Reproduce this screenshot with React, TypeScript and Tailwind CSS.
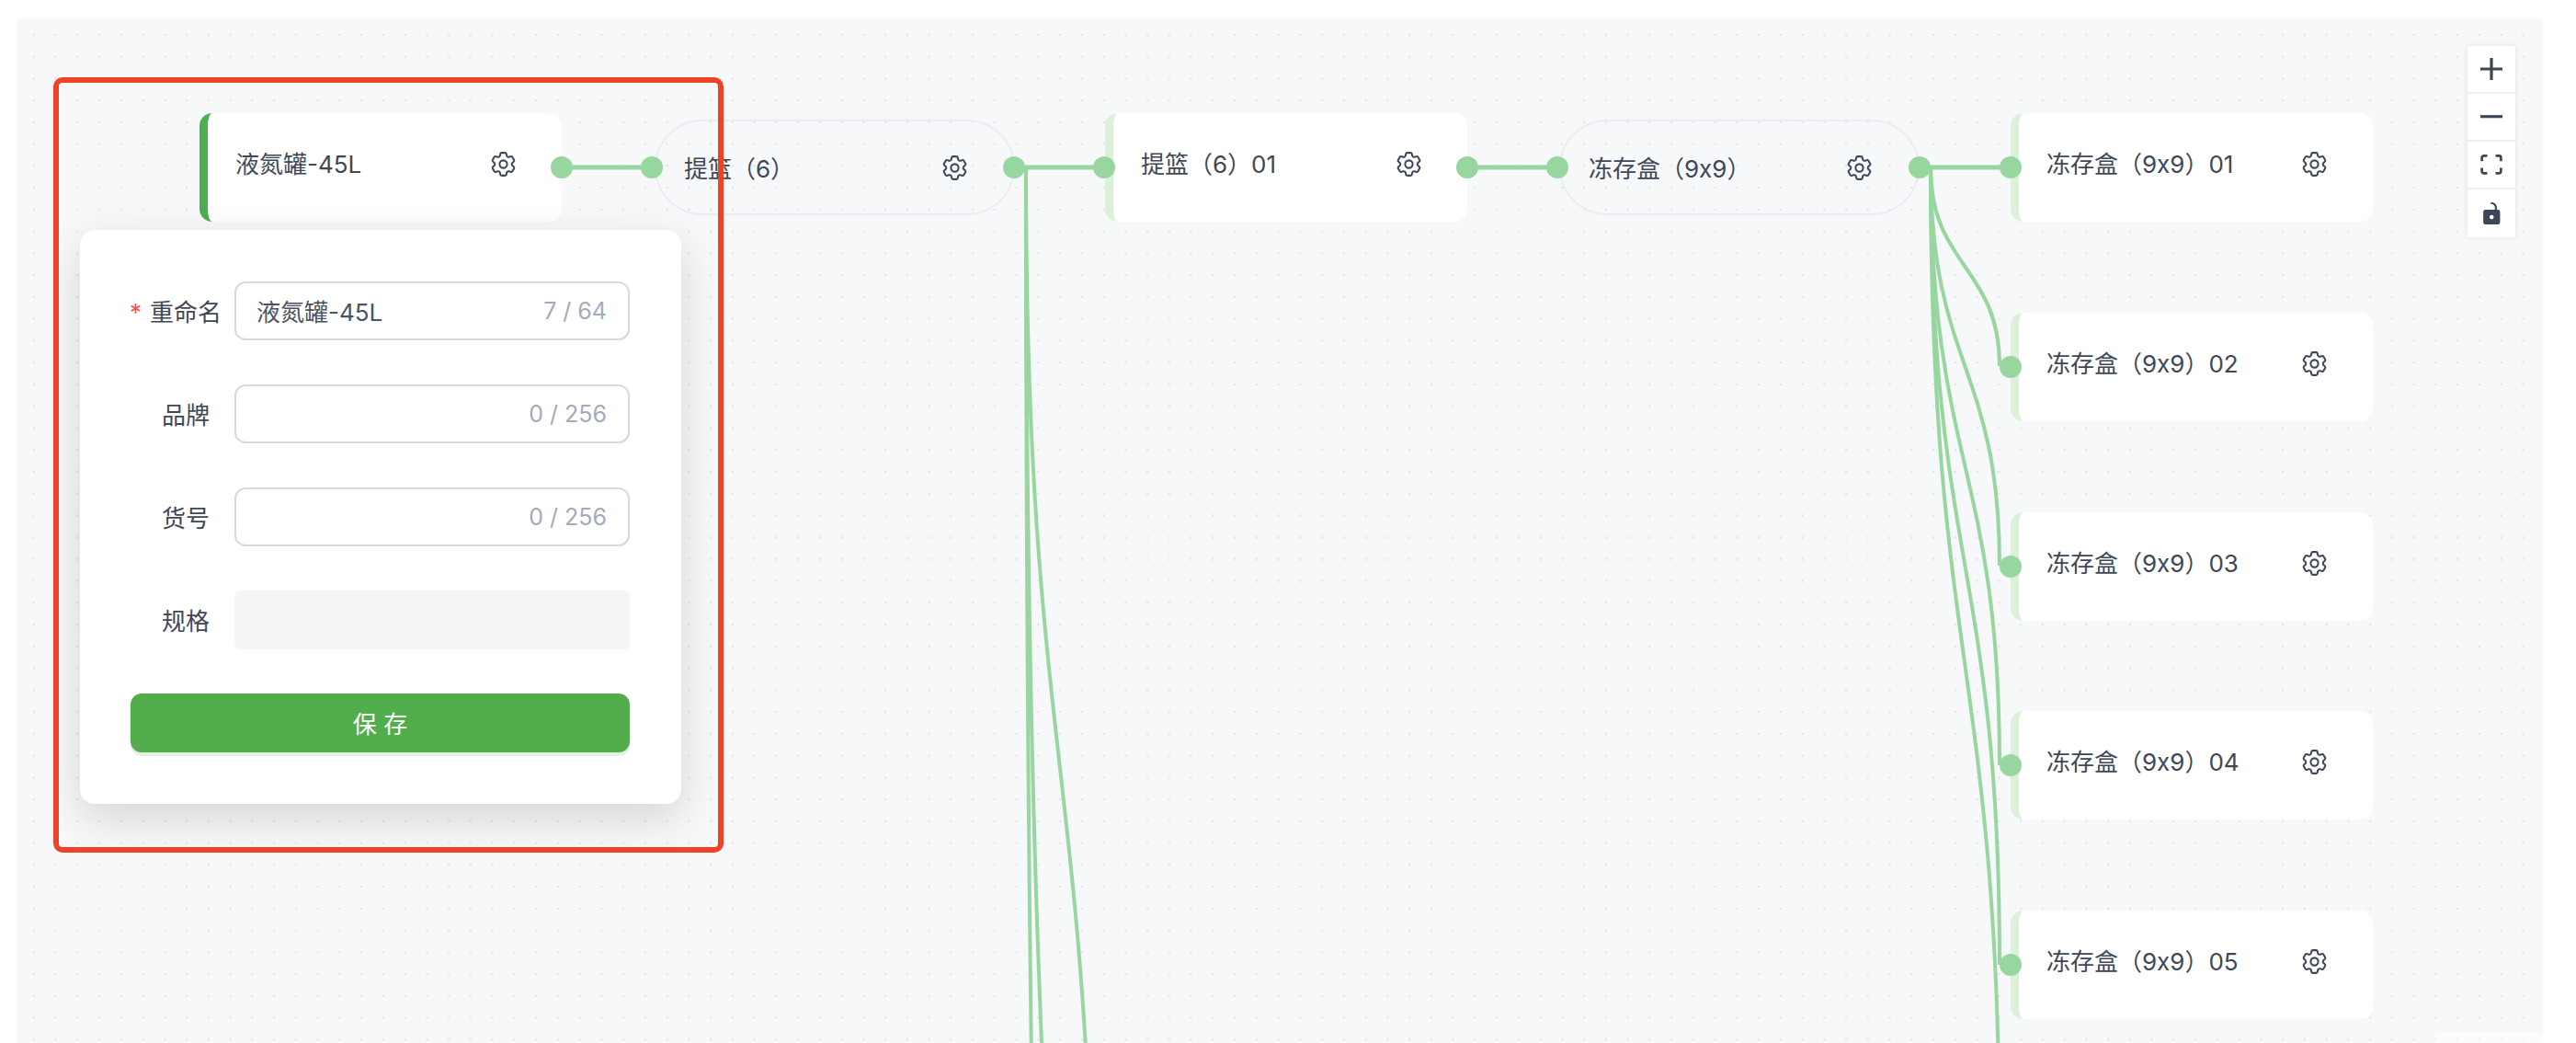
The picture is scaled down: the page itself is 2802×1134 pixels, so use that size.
import { HiOutlineCog6Tooth } from 'react-icons/hi2'

const FONT = 'font-["Inter","Noto_Sans_CJK_SC",sans-serif]'

function Gear({ className }: { className: string }) {
  return <HiOutlineCog6Tooth className={`absolute h-[33px] w-[33px] text-[#3f4757] ${className}`} />
}

function BoxNode({ label, left, top, active }: { label: string; left: string; top: string; active?: boolean }) {
  return (
    <div
      className={`absolute h-[118px] w-[394px] rounded-[14px] border-l-[9px] bg-white ${left} ${top} ${active ? 'border-l-[#4caf50]' : 'border-l-[#dcf0da]'}`}
    >
      <span className="absolute left-[30px] top-[41px] text-[26px] leading-[30px] whitespace-pre text-[#3f4757]">{label}</span>
      <Gear className="right-[47px] top-[39px]" />
    </div>
  )
}

function PillNode({ label, left }: { label: string; left: string }) {
  return (
    <div className={`absolute top-[110px] h-[104px] w-[392px] rounded-[52px] border-2 border-[#eaecef] ${left}`}>
      <span className="absolute left-[30px] top-[37px] text-[26px] leading-[30px] whitespace-pre text-[#3f4757]">{label}</span>
      <Gear className="right-[47px] top-[34px]" />
    </div>
  )
}

function Handle({ left, top }: { left: string; top: string }) {
  return <div className={`absolute h-[24px] w-[24px] rounded-full bg-[#98d6a0] ${left} ${top}`} />
}

function FormRow({ label, required, count, value }: { label: string; required?: boolean; count: string; value?: string }) {
  return (
    <div className="flex items-center">
      <div className={`flex w-[113px] shrink-0 justify-end whitespace-nowrap pt-[2px] text-[26px] text-[#3f4757] ${required ? 'pr-[14px]' : 'pr-[27px]'}`}>
        {required ? <span className="mr-[9px] text-[#ff4d4f]">*</span> : null}
        {label}
      </div>
      <div className="flex h-[64px] flex-1 items-center justify-between rounded-[12px] border-2 border-[#d9d9d9] bg-white pl-[22px] pr-[23px] pt-[2px] text-[26px]">
        <span className="text-[#4b5363]">{value}</span>
        <span className="text-[25px] text-[#a3abbb]">{count}</span>
      </div>
    </div>
  )
}

export default function App() {
  // canvas offset: edges are drawn relative to the canvas box at (18, 20)
  const source2 = 'M1098 162 C1098 816 1172 816 1172 1464'
  const source2b = 'M1098 162 C1098 1518 1172 1518 1172 2874'
  const source2c = 'M1098 162 C1098 2360 1172 2360 1172 4557'
  const targets = [398, 615, 832, 1049, 1266]

  return (
    <div className={`relative h-[1134px] w-[2802px] overflow-hidden bg-white ${FONT}`}>
      <div className="absolute left-[18px] top-[20px] h-[1114px] w-[2748px] bg-[#f7f8fa] bg-[radial-gradient(#dfe1e6_1.2px,transparent_1.2px)] bg-[size:23.75px_23.75px] bg-[position:7px_6px]">
        <svg className="absolute inset-0" width={2748} height={1114} fill="none" stroke="#98d6a0" strokeWidth={4}>
          <path d="M593 162 H691" strokeWidth={5} />
          <path d="M1085 162 H1183" strokeWidth={5} />
          <path d="M1578 162 H1676" strokeWidth={5} />
          <path d="M2070 162 H2169" strokeWidth={5} />
          <path d={source2} />
          <path d={source2b} />
          <path d={source2c} />
          {targets.map((y) => {
            const ty = y - 20
            const mid = (162 + ty) / 2
            return <path key={y} d={`M2082 162 C2082 ${mid} 2157 ${mid} 2157 ${ty}`} />
          })}
        </svg>

        <BoxNode label="液氮罐-45L" left="left-[199px]" top="top-[103px]" active />
        <PillNode label="提篮（6）" left="left-[694px]" />
        <BoxNode label="提篮（6）01" left="left-[1184px]" top="top-[103px]" />
        <PillNode label="冻存盒（9x9）" left="left-[1678px]" />
        <BoxNode label="冻存盒（9x9）01" left="left-[2169px]" top="top-[103px]" />
        <BoxNode label="冻存盒（9x9）02" left="left-[2169px]" top="top-[320px]" />
        <BoxNode label="冻存盒（9x9）03" left="left-[2169px]" top="top-[537px]" />
        <BoxNode label="冻存盒（9x9）04" left="left-[2169px]" top="top-[753px]" />
        <BoxNode label="冻存盒（9x9）05" left="left-[2169px]" top="top-[970px]" />

        <Handle left="left-[581px]" top="top-[150px]" />
        <Handle left="left-[679px]" top="top-[150px]" />
        <Handle left="left-[1073px]" top="top-[150px]" />
        <Handle left="left-[1171px]" top="top-[150px]" />
        <Handle left="left-[1566px]" top="top-[150px]" />
        <Handle left="left-[1664px]" top="top-[150px]" />
        <Handle left="left-[2058px]" top="top-[150px]" />
        <Handle left="left-[2157px]" top="top-[150px]" />
        <Handle left="left-[2157px]" top="top-[367px]" />
        <Handle left="left-[2157px]" top="top-[584px]" />
        <Handle left="left-[2157px]" top="top-[800px]" />
        <Handle left="left-[2157px]" top="top-[1017px]" />

        <div className="absolute left-[2666px] top-[30px] flex w-[52px] flex-col bg-[#eeeeee] shadow-[0_0_6px_rgba(0,0,0,0.1)]">
          <div className="flex h-[50px] items-center justify-center bg-white">
            <svg viewBox="0 0 32 32" className="h-[24px] w-[24px] fill-[#3f4757]">
              <path d="M32 18.133H18.133V32h-4.266V18.133H0v-4.266h13.867V0h4.266v13.867H32z" />
            </svg>
          </div>
          <div className="mt-[2px] flex h-[50px] items-center justify-center bg-white">
            <svg viewBox="0 0 32 5" className="h-[4px] w-[24px] fill-[#3f4757]">
              <path d="M0 0h32v4.2H0z" />
            </svg>
          </div>
          <div className="mt-[2px] flex h-[50px] items-center justify-center bg-white">
            <svg viewBox="0 0 32 30" className="h-[22px] w-[24px] fill-[#3f4757]">
              <path d="M3.692 4.63c0-.53.4-.938.939-.938h5.215V0H4.708C2.13 0 0 2.054 0 4.63v5.216h3.692V4.63zM27.354 0h-5.2v3.692h5.17c.53 0 .984.4.984.939v5.215H32V4.631A4.624 4.624 0 0027.354 0zm.954 24.83c0 .532-.4.94-.939.94h-5.215v3.768h5.215c2.577 0 4.631-2.13 4.631-4.707v-5.139h-3.692v5.139zm-23.677.94c-.531 0-.939-.4-.939-.94v-5.138H0v5.139c0 2.577 2.13 4.707 4.708 4.707h5.138V25.77H4.631z" />
            </svg>
          </div>
          <div className="mt-[2px] flex h-[52px] items-center justify-center bg-white">
            <svg viewBox="0 0 25 32" className="h-[24px] w-[19px] fill-[#3f4757]">
              <path d="M21.333 10.667H19.81V7.619C19.81 3.429 16.38 0 12.19 0c-4.114 1.828-1.37 2.133.305 2.438 1.676.305 4.42 2.59 4.42 5.181v3.048H3.047A3.056 3.056 0 000 13.714v15.238A3.056 3.056 0 003.048 32h18.285a3.056 3.056 0 003.048-3.048V13.714a3.056 3.056 0 00-3.048-3.047zM12.19 24.533a3.056 3.056 0 01-3.047-3.047 3.056 3.056 0 013.047-3.048 3.056 3.056 0 013.048 3.048 3.056 3.056 0 01-3.048 3.047z" />
            </svg>
          </div>
        </div>

        <div className="absolute left-[69px] top-[230px] flex w-[654px] flex-col gap-[48px] rounded-[16px] bg-white py-[56px] pl-[55px] pr-[56px] shadow-[0_16px_48px_rgba(0,0,0,0.14)]">
          <FormRow label="重命名" required value="液氮罐-45L" count="7 / 64" />
          <FormRow label="品牌" count="0 / 256" />
          <FormRow label="货号" count="0 / 256" />
          <div className="flex items-center">
            <div className="flex w-[113px] shrink-0 justify-end whitespace-nowrap pr-[27px] pt-[2px] text-[26px] text-[#3f4757]">规格</div>
            <div className="h-[64px] flex-1 rounded-[6px] bg-[#f4f5f5]" />
          </div>
          <button
            type="button"
            className="h-[64px] rounded-[12px] bg-[#52ae4d] pt-[2px] text-[26px] text-white shadow-[0_4px_0_#e3f1e3]"
          >
            保 存
          </button>
        </div>

        <div className="absolute bottom-0 right-0 h-[12px] w-[117px] bg-white/50" />
      </div>

      <div className="absolute left-[58px] top-[84px] h-[843px] w-[729px] rounded-[10px] border-[6px] border-[#ee4327]" />
    </div>
  )
}
